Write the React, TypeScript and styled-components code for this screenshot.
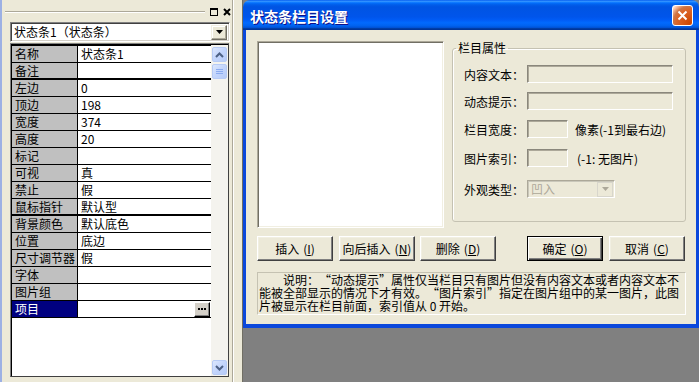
import React from 'react'
import styled, { createGlobalStyle } from 'styled-components'

const GlobalStyle = createGlobalStyle`
  html, body {
    margin: 0;
    padding: 0;
  }
  body {
    width: 699px;
    height: 382px;
    overflow: hidden;
    background: #808080;
    font-family: "Noto Sans CJK SC", "Liberation Sans", sans-serif;
    font-size: 12px;
    color: #000;
    text-spacing-trim: space-all;
  }
`

const Screen = styled.div`
  display: flex;
  width: 699px;
  height: 382px;
`

/* ---------- property panel (left) ---------- */

const Panel = styled.div`
  flex: none;
  width: 243px;
  height: 382px;
  box-sizing: border-box;
  display: flex;
  background: #ece9d8;
  border-left: 2px solid #9cb0e4;
  border-right: 1px solid #716f64;
`

const PanelBody = styled.div`
  width: 231px;
  box-sizing: border-box;
  display: flex;
  flex-direction: column;
  border-right: 1px solid #aca899;
  box-shadow: 1px 0 0 #fff;
`

const PanelHeader = styled.div`
  height: 22px;
  display: flex;
  align-items: center;
  padding: 2px 0 0 3px;
  box-sizing: border-box;
`

const Grip = styled.div`
  flex: 1;
  height: 0;
  border-top: 1px solid #aca899;
  border-bottom: 1px solid #fff;
  margin-right: 4px;
`

const TinyButton = styled.div`
  width: 10px;
  height: 10px;
  display: flex;
  margin-right: 3px;
  &:last-child {
    margin-right: 0;
  }
`

const Combo = styled.div`
  margin-left: 8px;
  width: 220px;
  height: 20px;
  box-sizing: border-box;
  display: flex;
  align-items: center;
  background: #fff;
  border: 1px solid;
  border-color: #808080 #fff #fff #808080;
  box-shadow: inset 1px 1px #404040, inset -1px -1px #d4d0c8;
  padding: 0 2px 0 3px;
`

const ComboText = styled.span`
  flex: 1;
  line-height: 16px;
  white-space: nowrap;
`

const DropButton = styled.div<{ $disabled?: boolean }>`
  width: 16px;
  height: 15px;
  box-sizing: border-box;
  display: flex;
  align-items: center;
  justify-content: center;
  background: #ece9d8;
  border: 1px solid;
  border-color: ${p => (p.$disabled ? '#d8d6cc' : '#f1efe2 #716f64 #716f64 #f1efe2')};
  box-shadow: ${p => (p.$disabled ? 'none' : 'inset -1px -1px #aca899, inset 1px 1px #fff')};
`

const Grid = styled.div`
  margin: 1px 0 0 8px;
  width: 219px;
  height: 334px;
  box-sizing: border-box;
  display: flex;
  border: 1px solid;
  border-color: #808080 #404040 #404040 #808080;
  box-shadow: inset 1px 1px #000;
  padding: 1px 0 0 1px;
`

const Rows = styled.div`
  width: 199px;
  flex: none;
  background: #fff;
  display: flex;
  flex-direction: column;
  border-top: 1px solid #000;
`

const Row = styled.div<{ $thick?: boolean }>`
  display: flex;
  height: ${p => (p.$thick ? 15 : 16)}px;
  border-bottom: ${p => (p.$thick ? 2 : 1)}px solid #000;
`

const Label = styled.div<{ $selected?: boolean }>`
  width: 66px;
  flex: none;
  box-sizing: border-box;
  padding-left: 3px;
  border-right: 1px solid #000;
  background: ${p => (p.$selected ? '#000080' : '#c0c0c0')};
  color: ${p => (p.$selected ? '#fff' : '#000')};
  line-height: 16px;
  white-space: nowrap;
  overflow: hidden;
`

const Value = styled.div`
  flex: 1;
  display: flex;
  align-items: center;
  padding-left: 3px;
  line-height: 16px;
  white-space: nowrap;
`

const EllipsisButton = styled.div`
  margin-left: auto;
  margin-right: 1px;
  width: 16px;
  height: 15px;
  box-sizing: border-box;
  display: flex;
  align-items: center;
  justify-content: center;
  background: #d4d0c8;
  border: 1px solid;
  border-color: #fff #000 #000 #fff;
  box-shadow: inset -1px -1px #808080;
`

const ScrollBar = styled.div`
  flex: 1;
  display: flex;
  flex-direction: column;
  align-items: center;
  background: #f4f3ee;
  padding: 2px 0 1px;
  box-sizing: border-box;
`

const ScrollPart = styled.div<{ $push?: boolean }>`
  width: 15px;
  height: 15px;
  box-sizing: border-box;
  margin-top: ${p => (p.$push ? 'auto' : '2px')};
  &:first-child {
    margin-top: 0;
  }
  border: 1px solid #b7cbf5;
  border-radius: 2px;
  background: linear-gradient(135deg, #dce7fd 0%, #c3d5fc 50%, #b6cbf8 100%);
  display: flex;
  align-items: center;
  justify-content: center;
`

/* ---------- dialog (right) ---------- */

const RightSide = styled.div`
  flex: 1;
  display: flex;
  flex-direction: column;
  background: #808080;
`

const Window = styled.div`
  height: 328px;
  display: flex;
  flex-direction: column;
`

const TitleBar = styled.div`
  height: 30px;
  flex: none;
  box-sizing: border-box;
  display: flex;
  align-items: center;
  padding: 1px 6px 0 7px;
  border-radius: 7px 7px 0 0;
  background: linear-gradient(
    to bottom,
    #0058ee 0%,
    #3593ff 4%,
    #288eff 6%,
    #127dff 8%,
    #036ffc 10%,
    #0262ee 14%,
    #0057e5 20%,
    #0054e3 24%,
    #0055eb 56%,
    #005bf5 66%,
    #026afe 76%,
    #0062ef 86%,
    #0052d6 92%,
    #0040ab 94%,
    #003092 100%
  );
`

const Title = styled.span`
  flex: 1;
  color: #fff;
  font-size: 14px;
  font-weight: bold;
  text-shadow: 1px 1px #0f1089;
`

const CloseButton = styled.div`
  width: 21px;
  height: 21px;
  box-sizing: border-box;
  border: 1px solid #fff;
  border-radius: 3px;
  background: radial-gradient(circle at 90% 90%, #cc4600 0%, #dc6527 55%, #cd7546 70%, #ffccb2 90%, #fff 100%);
  display: flex;
  align-items: center;
  justify-content: center;
`

const Frame = styled.div`
  flex: 1;
  display: flex;
  flex-direction: column;
  background: #ece9d8;
  border-style: solid;
  border-color: #0b48dc;
  border-width: 0 3px 4px 3px;
  padding: 11px 10px 0 11px;
`

const TopRow = styled.div`
  display: flex;
  gap: 8px;
  height: 187px;
`

const ListBox = styled.div`
  width: 187px;
  height: 187px;
  box-sizing: border-box;
  background: #fff;
  border: 1px solid;
  border-color: #aca899 #fff #fff #aca899;
  box-shadow: inset 1px 1px #716f64, inset -1px -1px #f1efe2;
`

const GroupBox = styled.fieldset`
  flex: 1;
  margin: 0;
  padding: 0 12px 0 11px;
  height: 181px;
  box-sizing: border-box;
  border: 1px solid #c5c2b2;
  border-radius: 3px;
  box-shadow: inset 1px 1px #fff;
  min-width: 0;
`

const Legend = styled.legend`
  margin-left: -8px;
  padding: 0 2px;
  line-height: 14px;
`

const Field = styled.div<{ $top: number }>`
  display: flex;
  align-items: center;
  height: 18px;
  margin-top: ${p => p.$top}px;
`

const FieldLabel = styled.span`
  width: 63px;
  flex: none;
  white-space: nowrap;
`

const TextBox = styled.div<{ $w: number }>`
  width: ${p => p.$w}px;
  height: 18px;
  flex: none;
  box-sizing: border-box;
  border: 1px solid;
  border-color: #8a877c #fff #fff #8a877c;
  box-shadow: inset 1px 1px #aca899;
`

const Hint = styled.span<{ $gap: number }>`
  margin-left: ${p => p.$gap}px;
  white-space: nowrap;
`

const SelectBox = styled.div`
  width: 88px;
  height: 18px;
  box-sizing: border-box;
  display: flex;
  align-items: center;
  padding: 0 1px 0 3px;
  border: 1px solid;
  border-color: #aca899 #fff #fff #aca899;
  box-shadow: inset 1px 1px #c9c7ba;
  color: #aca899;
`

const ButtonRow = styled.div`
  display: flex;
  margin-top: 8px;
  height: 25px;
`

const Button = styled.div<{ $default?: boolean; $gap?: number }>`
  width: 76px;
  height: 25px;
  box-sizing: border-box;
  margin-left: ${p => p.$gap ?? 0}px;
  display: flex;
  align-items: center;
  justify-content: center;
  background: #ece9d8;
  border: 1px solid;
  border-color: ${p => (p.$default ? '#000' : '#fff #404040 #404040 #fff')};
  box-shadow: ${p =>
    p.$default
      ? 'inset 1px 1px #fff, inset -1px -1px #404040, inset -2px -2px #808080'
      : 'inset -1px -1px #808080, inset 1px 1px #f1efe2'};
  white-space: nowrap;
`

const Mnemonic = styled.span`
  margin-left: 4px;
`

const Note = styled.div`
  margin-top: 11px;
  height: 43px;
  box-sizing: border-box;
  border: 1px solid;
  border-color: #c5c2b2 #fff #fff #c5c2b2;
  padding: 0 0 0 1px;
  line-height: 13px;
  font-feature-settings: "fwid" 0;
`

const NoteLine = styled.div`
  white-space: pre;
`

const Desktop = styled.div`
  flex: 1;
  background: #808080;
`

const props: { name: string; value?: string; thick?: boolean }[] = [
  { name: '名称', value: '状态条1' },
  { name: '备注', thick: true },
  { name: '左边', value: '0' },
  { name: '顶边', value: '198' },
  { name: '宽度', value: '374' },
  { name: '高度', value: '20' },
  { name: '标记' },
  { name: '可视', value: '真' },
  { name: '禁止', value: '假' },
  { name: '鼠标指针', value: '默认型', thick: true },
  { name: '背景颜色', value: '默认底色' },
  { name: '位置', value: '底边' },
  { name: '尺寸调节器', value: '假' },
  { name: '字体' },
  { name: '图片组' },
]

const INDENT = '\u3000\u3000'

const noteLines = [
  INDENT + '说明：“动态提示”属性仅当栏目只有图片但没有内容文本或者内容文本不',
  '能被全部显示的情况下才有效。“图片索引”指定在图片组中的某一图片，此图',
  '片被显示在栏目前面，索引值从 0 开始。',
]

const DownArrow = ({ color = '#000' }: { color?: string }) => (
  <svg width="7" height="4" viewBox="0 0 7 4">
    <path d="M0 0h7L3.5 4z" fill={color} />
  </svg>
)

const Chevron = ({ up }: { up?: boolean }) => (
  <svg width="9" height="6" viewBox="0 0 9 6">
    <path
      d={up ? 'M1 5L4.5 1.5L8 5' : 'M1 1L4.5 4.5L8 1'}
      fill="none"
      stroke="#4d6185"
      strokeWidth="2"
    />
  </svg>
)

function PropertyPanel() {
  return (
    <Panel>
      <PanelBody>
        <PanelHeader>
          <Grip />
          <TinyButton>
            <svg width="10" height="10" viewBox="0 0 10 10">
              <rect x="1.5" y="1.5" width="7" height="7" fill="none" stroke="#000" />
              <rect x="1" y="1" width="8" height="2" fill="#000" />
            </svg>
          </TinyButton>
          <TinyButton>
            <svg width="10" height="10" viewBox="0 0 10 10">
              <path d="M2 2l6 6M8 2l-6 6" stroke="#000" strokeWidth="2" />
            </svg>
          </TinyButton>
        </PanelHeader>
        <Combo>
          <ComboText>状态条1（状态条）</ComboText>
          <DropButton>
            <DownArrow />
          </DropButton>
        </Combo>
        <Grid>
          <Rows>
            {props.map(p => (
              <Row key={p.name} $thick={p.thick}>
                <Label>{p.name}</Label>
                <Value>{p.value}</Value>
              </Row>
            ))}
            <Row>
              <Label $selected>项目</Label>
              <Value>
                <EllipsisButton>
                  <svg width="8" height="2" viewBox="0 0 8 2">
                    <path d="M0 0h2v2H0zM3 0h2v2H3zM6 0h2v2H6z" fill="#000" />
                  </svg>
                </EllipsisButton>
              </Value>
            </Row>
          </Rows>
          <ScrollBar>
            <ScrollPart>
              <Chevron up />
            </ScrollPart>
            <ScrollPart>
              <svg width="7" height="7" viewBox="0 0 7 7">
                <path d="M0 1.5h7M0 3.5h7M0 5.5h7" stroke="#8cacf0" strokeWidth="1" />
              </svg>
            </ScrollPart>
            <ScrollPart $push>
              <Chevron />
            </ScrollPart>
          </ScrollBar>
        </Grid>
      </PanelBody>
    </Panel>
  )
}

function StatusBarDialog() {
  return (
    <Window>
      <TitleBar>
        <Title>状态条栏目设置</Title>
        <CloseButton>
          <svg width="11" height="11" viewBox="0 0 11 11">
            <path d="M1.5 1.5l8 8M9.5 1.5l-8 8" stroke="#fff" strokeWidth="2" />
          </svg>
        </CloseButton>
      </TitleBar>
      <Frame>
        <TopRow>
          <ListBox />
          <GroupBox>
            <Legend>栏目属性</Legend>
            <Field $top={10}>
              <FieldLabel>内容文本：</FieldLabel>
              <TextBox $w={146} />
            </Field>
            <Field $top={9}>
              <FieldLabel>动态提示：</FieldLabel>
              <TextBox $w={146} />
            </Field>
            <Field $top={10}>
              <FieldLabel>栏目宽度：</FieldLabel>
              <TextBox $w={41} />
              <Hint $gap={7}>像素(-1到最右边)</Hint>
            </Field>
            <Field $top={11}>
              <FieldLabel>图片索引：</FieldLabel>
              <TextBox $w={41} />
              <Hint $gap={9}>(-1: 无图片)</Hint>
            </Field>
            <Field $top={13}>
              <FieldLabel>外观类型：</FieldLabel>
              <SelectBox>
                <ComboText>凹入</ComboText>
                <DropButton $disabled>
                  <DownArrow color="#aca899" />
                </DropButton>
              </SelectBox>
            </Field>
          </GroupBox>
        </TopRow>
        <ButtonRow>
          <Button>
            插入<Mnemonic>(<u>I</u>)</Mnemonic>
          </Button>
          <Button $gap={6}>
            向后插入<Mnemonic>(<u>N</u>)</Mnemonic>
          </Button>
          <Button $gap={5}>
            删除<Mnemonic>(<u>D</u>)</Mnemonic>
          </Button>
          <Button $gap={31} $default>
            确定<Mnemonic>(<u>O</u>)</Mnemonic>
          </Button>
          <Button $gap={6}>
            取消<Mnemonic>(<u>C</u>)</Mnemonic>
          </Button>
        </ButtonRow>
        <Note>
          {noteLines.map(line => (
            <NoteLine key={line}>{line}</NoteLine>
          ))}
        </Note>
      </Frame>
    </Window>
  )
}

export default function App() {
  return (
    <>
      <GlobalStyle />
      <Screen lang="zh-CN">
        <PropertyPanel />
        <RightSide>
          <StatusBarDialog />
          <Desktop />
        </RightSide>
      </Screen>
    </>
  )
}
